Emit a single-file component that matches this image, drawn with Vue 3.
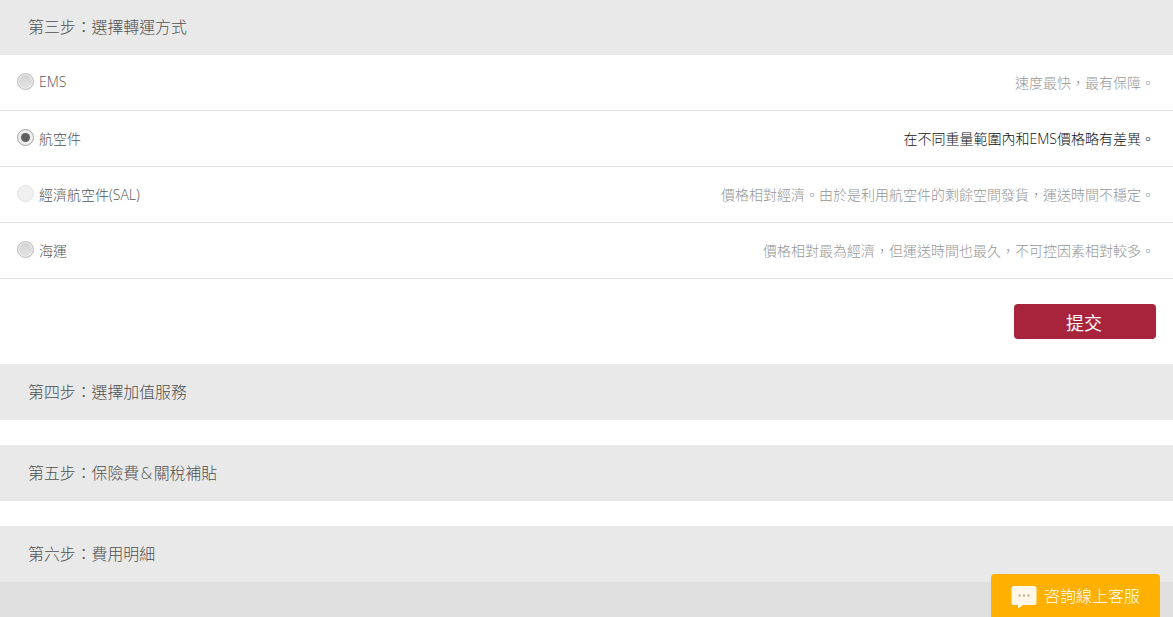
<template>
  <div class="page" lang="zh-TW">
    <section class="step">
      <h3 class="step-title">第三步：選擇轉運方式</h3>
      <ul class="options">
        <li v-for="o in options" :key="o.id" class="option">
          <label class="option-label">
            <span class="radio" :class="{ checked: o.checked, disabled: o.disabled }"></span>
            <span class="option-name">{{ o.name }}</span>
          </label>
          <span class="option-desc" :class="{ active: o.checked }">{{ o.desc }}</span>
        </li>
      </ul>
      <div class="actions">
        <button class="submit" type="button">提交</button>
      </div>
    </section>

    <section v-for="s in closedSteps" :key="s" class="step closed">
      <h3 class="step-title">
        <template v-for="(part, i) in s.split('&')" :key="i"><span v-if="i" class="amp">&amp;</span>{{ part }}</template>
      </h3>
    </section>

    <div class="footer-bg"></div>

    <a class="chat" href="#">
      <svg class="chat-icon" width="26" height="24" viewBox="0 0 26 24">
        <path d="M3 1h20a2.500 2.500 0 0 1 2.500 2.500v14a2.500 2.500 0 0 1-2.500 2.500H12l-5 3.500V20H3a2.500 2.500 0 0 1-2.500-2.500v-14A2.500 2.500 0 0 1 3 1z" fill="#fff8e8" />
        <circle cx="8.500" cy="10.500" r="1.200" fill="#c9b68c" />
        <circle cx="13" cy="10.500" r="1.200" fill="#c9b68c" />
        <circle cx="17.500" cy="10.500" r="1.200" fill="#c9b68c" />
      </svg>
      <span class="chat-text">咨詢線上客服</span>
    </a>
  </div>
</template>

<script setup>
const options = [
  { id: 'ems', name: 'EMS', desc: '速度最快，最有保障。' },
  { id: 'air', name: '航空件', desc: '在不同重量範圍內和EMS價格略有差異。', checked: true },
  { id: 'sal', name: '經濟航空件(SAL)', desc: '價格相對經濟。由於是利用航空件的剩餘空間發貨，運送時間不穩定。', disabled: true },
  { id: 'sea', name: '海運', desc: '價格相對最為經濟，但運送時間也最久，不可控因素相對較多。' },
]

const closedSteps = ['第四步：選擇加值服務', '第五步：保險費&關稅補貼', '第六步：費用明細']
</script>

<style>
html, body { margin: 0; background: #fff; }
</style>

<style scoped>
.page {
  position: relative;
  display: flex;
  flex-direction: column;
  height: 100vh;
  overflow: hidden;
  font-family: "Open Sans", "Noto Sans CJK TC", sans-serif;
  font-weight: 300;
  color: #555;
}

.step-title {
  margin: 0;
  height: 55px;
  padding-left: 28px;
  background: #e9e9e9;
  font-size: 15.900px;
  font-weight: 300;
  line-height: 55px;
  color: #505050;
}
.amp {
  margin: 0 1px;
  font-family: "DejaVu Sans", sans-serif;
  font-weight: 200;
}

.options {
  margin: 0;
  padding: 0;
  list-style: none;
}
.option {
  display: flex;
  align-items: center;
  justify-content: space-between;
  height: 53px;
  padding: 0 18px 2px 17px;
  border-bottom: 1px solid #e2e2e2;
  font-size: 14px;
}
.option-label {
  display: flex;
  align-items: center;
  gap: 5px;
}
.option-name { color: #555; }
.option-desc { color: #969696; }
.option-desc.active { color: #111; }

.radio {
  position: relative;
  box-sizing: border-box;
  width: 17px;
  height: 17px;
  border-radius: 50%;
  border: 1px solid #b9b9b9;
  background: linear-gradient(180deg, #d2d2d2, #e4e4e4);
  box-shadow: inset 0 0 0 1px #efefef;
}
.radio.checked {
  background: #ececec;
  border-color: #a5a5a5;
}
.radio.checked::after {
  content: "";
  position: absolute;
  inset: 3px;
  border-radius: 50%;
  background: #5e5e5e;
}
.radio.disabled {
  border-color: #e2e2e2;
  background: #f0f0f0;
  box-shadow: none;
}

.actions {
  display: flex;
  justify-content: flex-end;
  padding: 25px 17px;
}
.submit {
  width: 142px;
  height: 35px;
  padding: 0 2px 0 0;
  border: 0;
  border-radius: 4px;
  background: #a8233c;
  color: #fff;
  font-family: inherit;
  font-size: 18px;
  font-weight: 400;
}

.step.closed { margin-bottom: 25px; }
.step.closed .step-title { height: 56px; line-height: 56px; }
.step.closed:nth-of-type(4) { margin-bottom: 0; }

.footer-bg {
  flex: 1;
  background: #e0e0e0;
}

.chat {
  position: absolute;
  right: 13px;
  bottom: 0;
  display: flex;
  align-items: center;
  gap: 7px;
  box-sizing: border-box;
  width: 169px;
  height: 43px;
  padding-left: 20px;
  border-radius: 4px 4px 0 0;
  background: #ffb000;
  color: #fff;
  font-size: 16px;
  text-decoration: none;
}
.chat-icon { flex: none; margin-top: 3px; }
.chat-text { padding-bottom: 2px; }
</style>
